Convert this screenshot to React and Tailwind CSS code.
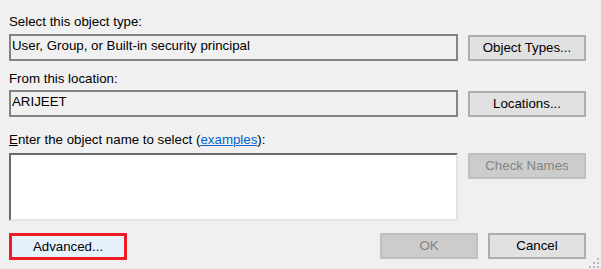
export default function App() {
  const font = { fontFamily: '"Liberation Sans", Arial, sans-serif' };
  const btn =
    "flex items-center justify-center h-[26px] border-2 border-[#adadad] bg-[#e1e1e1] text-black";
  const disabled =
    "flex items-center justify-center h-[26px] border-2 border-[#bfbfbf] bg-[#cccccc] text-[#838383]";
  return (
    <div
      className="relative w-[601px] h-[269px] bg-[#f0f0f0] pl-[9px] flex flex-col text-[13.3px] leading-4 text-black overflow-hidden"
      style={font}
    >
      <div className="mt-[14px] h-4">Select this object type:</div>
      <div className="mt-[4px] flex items-center gap-[10px]">
        <div className="w-[449px] h-[27px] border-2 border-[#838383] pl-[1px] pt-[2px] whitespace-nowrap">
          User, Group, or Built-in security principal
        </div>
        <div className={btn + " w-[118px]"}>Object Types...</div>
      </div>
      <div className="mt-[10px] h-4">From this location:</div>
      <div className="mt-[3px] flex items-center gap-[10px]">
        <div className="w-[449px] h-[27px] border-2 border-[#838383] pl-[1px] pt-[2px]">
          ARIJEET
        </div>
        <div className={btn + " w-[118px]"}>Locations...</div>
      </div>
      <div className="mt-[15px] h-4">
        <span className="underline">E</span>nter the object name to select (
        <span className="text-[#0066cc] underline">examples</span>):
      </div>
      <div className="mt-[5px] flex items-start gap-[10px]">
        <div className="w-[449px] h-[68px] bg-white border-2 border-t-[#6b6b6b] border-l-[#6b6b6b] border-r-[#e3e3e3] border-b-[#e3e3e3]"></div>
        <div className={disabled + " w-[118px]"}>Check Names</div>
      </div>
      <div className="mt-[12px] flex items-start">
        <div className="w-[118px] h-[27px] border-[3px] border-[#ed1c24] bg-[#e5f1fb] flex items-center justify-center">
          Advanced...
        </div>
        <div className={disabled + " w-[98px] ml-[253px]"}>OK</div>
        <div className={btn + " w-[98px] ml-[10px]"}>Cancel</div>
      </div>
      <svg
        className="absolute right-[1px] bottom-0"
        width="11"
        height="11"
        viewBox="0 0 11 11"
      >
        <g fill="#b8b8b8">
          <rect x="8" y="0" width="2" height="2" />
          <rect x="4" y="4" width="2" height="2" />
          <rect x="8" y="4" width="2" height="2" />
          <rect x="0" y="8" width="2" height="2" />
          <rect x="4" y="8" width="2" height="2" />
          <rect x="8" y="8" width="2" height="2" />
        </g>
      </svg>
    </div>
  );
}
